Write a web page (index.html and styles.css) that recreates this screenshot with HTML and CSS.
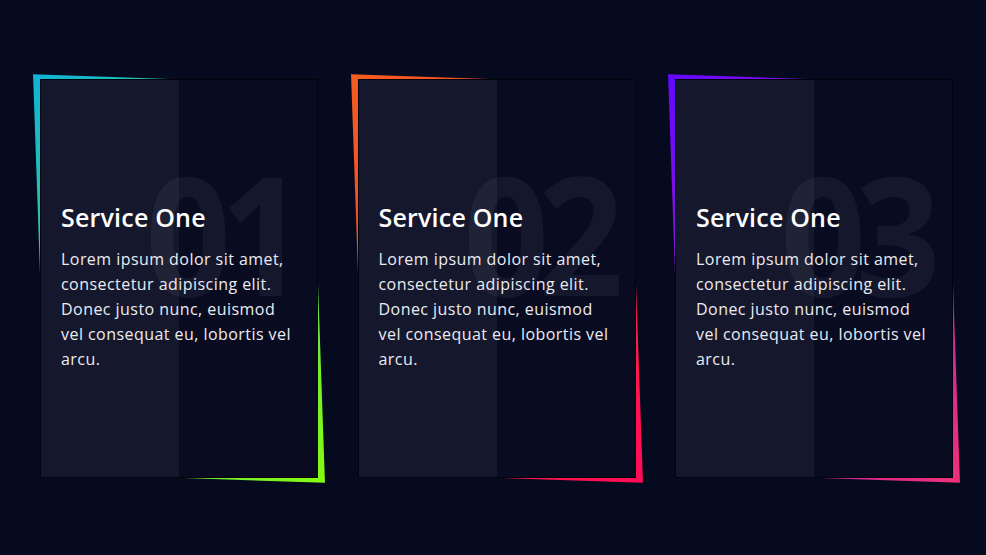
FILE: index.html
```html
<!DOCTYPE html>
<html lang="en">
<head>
<meta charset="utf-8">
<title>Services</title>
<link rel="stylesheet" href="styles.css">
</head>
<body>
<main class="services">
  <article class="card card--cyan">
    <div class="card__body">
      <span class="card__num">01</span>
      <h2 class="card__title">Service One</h2>
      <p class="card__text">Lorem ipsum dolor sit amet, consectetur adipiscing elit. Donec justo nunc, euismod vel consequat eu, lobortis vel arcu.</p>
    </div>
  </article>
  <article class="card card--orange">
    <div class="card__body">
      <span class="card__num">02</span>
      <h2 class="card__title">Service One</h2>
      <p class="card__text">Lorem ipsum dolor sit amet, consectetur adipiscing elit. Donec justo nunc, euismod vel consequat eu, lobortis vel arcu.</p>
    </div>
  </article>
  <article class="card card--purple">
    <div class="card__body">
      <span class="card__num">03</span>
      <h2 class="card__title">Service One</h2>
      <p class="card__text">Lorem ipsum dolor sit amet, consectetur adipiscing elit. Donec justo nunc, euismod vel consequat eu, lobortis vel arcu.</p>
    </div>
  </article>
  <article class="card card--yellow">
    <div class="card__body"></div>
  </article>
</main>
</body>
</html>
```
FILE: styles.css
```css
html, body {
  margin: 0;
  padding: 0;
  background: #060a1e;
  overflow: hidden;
}

body {
  font-family: "Open Sans", "Liberation Sans", sans-serif;
  color: #ffffff;
}

.services {
  display: flex;
  gap: 39.5px;
  padding: 79px 40px;
}

.card {
  position: relative;
  flex: 0 0 278px;
  height: 399px;
}

.card::before {
  content: "";
  position: absolute;
  inset: 0;
  transform: skew(2deg, 2deg);
  background: linear-gradient(135deg, var(--c1), var(--c2));
}

.card--cyan { --c1: #0fb3d8; --c2: #86fb10; }
.card--orange { --c1: #f45d1f; --c2: #ff0a57; }
.card--purple { --c1: #6208ff; --c2: #f0307a; }
.card--yellow { --c1: #ffbb0d; --c2: #ff5e00; }

.card__body {
  position: relative;
  box-sizing: border-box;
  height: 100%;
  padding: 119px 18px 0 20px;
  background: #090c21;
  border: 1px solid #02040c;
  overflow: hidden;
}

.card__body::before {
  content: "";
  position: absolute;
  top: 0;
  left: 0;
  width: 50%;
  height: 100%;
  background: rgba(255, 255, 255, 0.05);
}

.card__num {
  position: absolute;
  top: 69px;
  right: 22px;
  font-size: 166px;
  line-height: 1;
  font-weight: 700;
  letter-spacing: -12px;
  color: rgba(255, 255, 255, 0.05);
  transform: scaleX(0.9);
  transform-origin: right center;
}

.card__title {
  position: relative;
  margin: 0 0 12px;
  font-size: 25px;
  line-height: 36px;
  font-weight: 600;
  letter-spacing: 0.2px;
  color: #ffffff;
}

.card__text {
  position: relative;
  margin: 0;
  font-size: 16px;
  line-height: 25px;
  font-weight: 500;
  letter-spacing: 0.45px;
  color: #ebebf2;
}
```
